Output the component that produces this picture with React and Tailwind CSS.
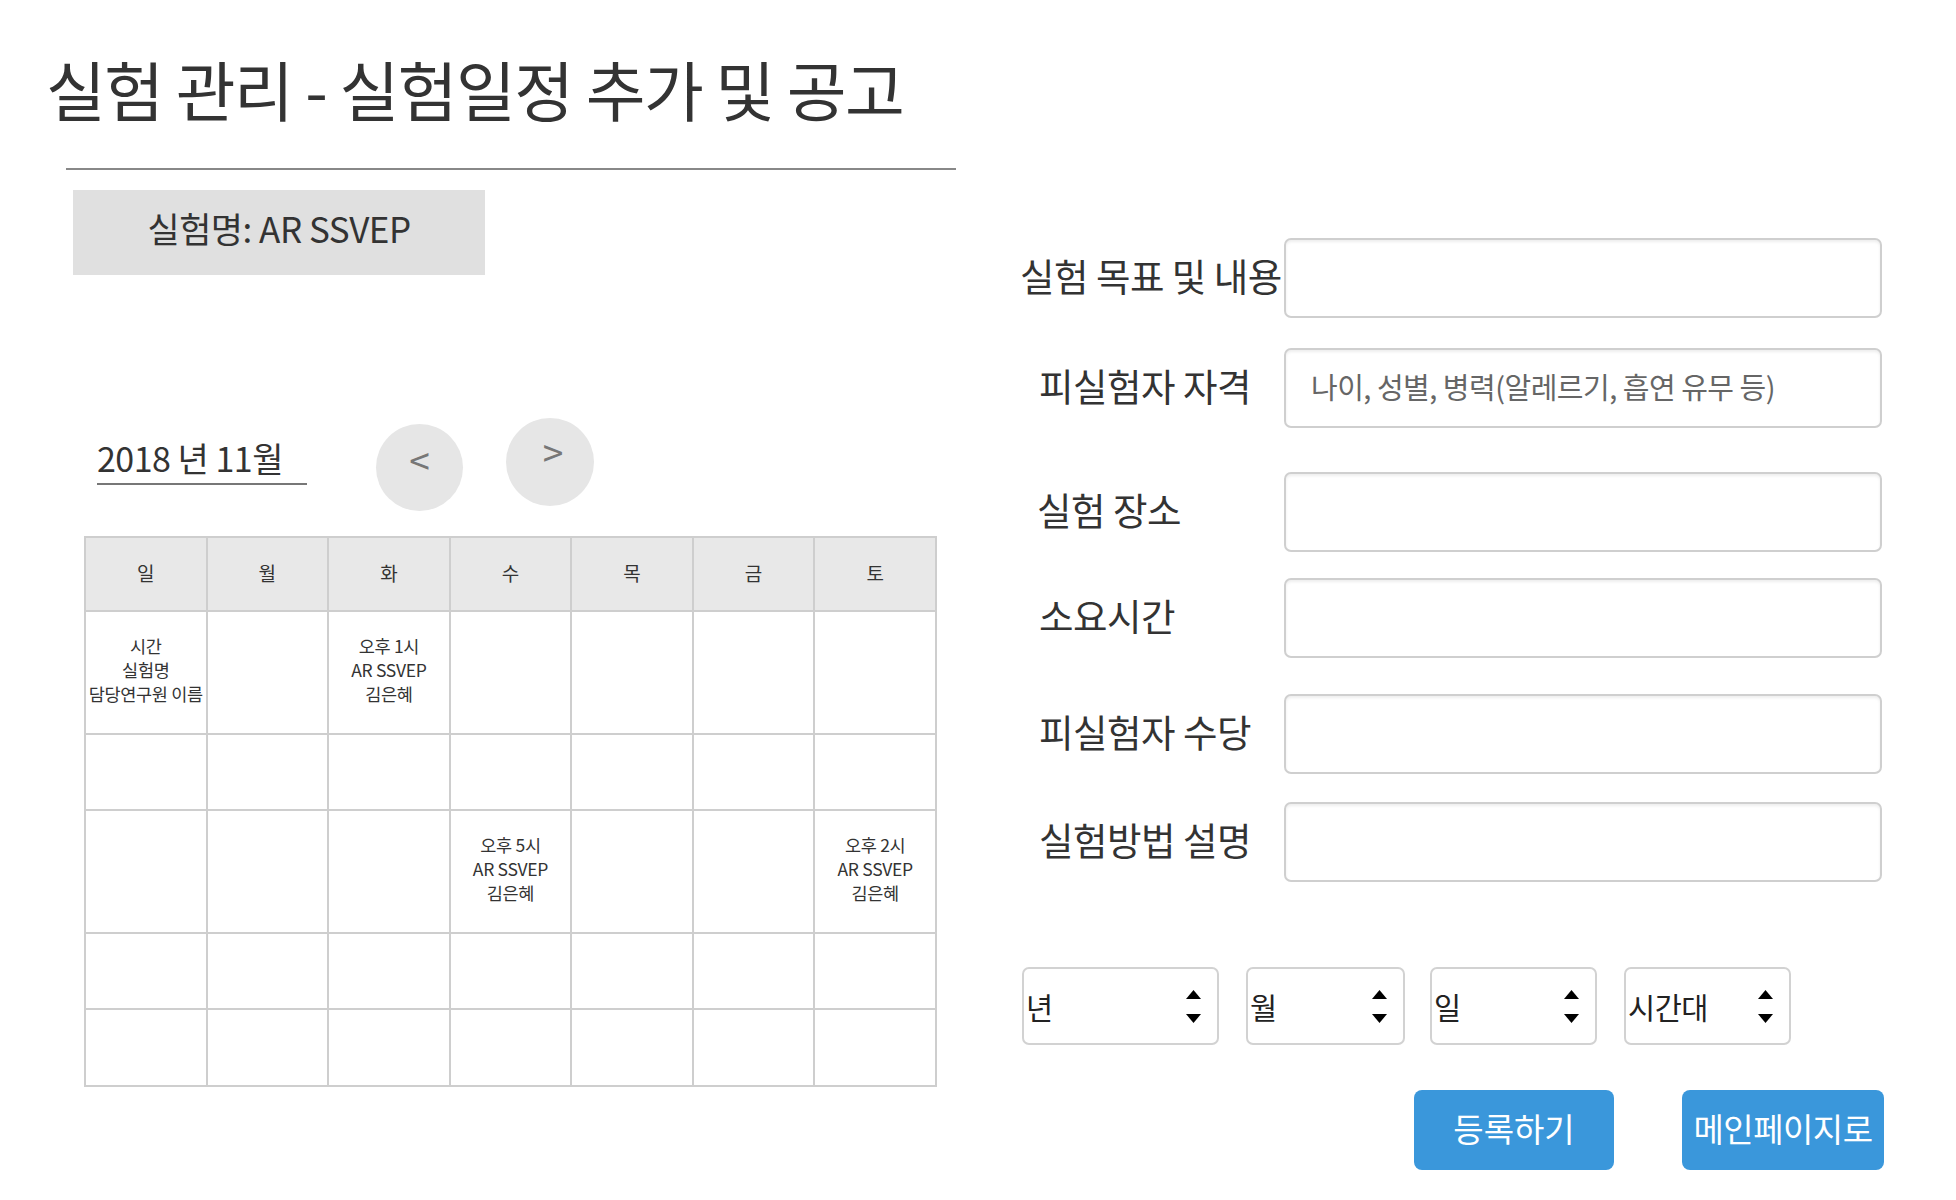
import React from "react";

const FONT = { fontFamily: '"Noto Sans CJK KR", "Noto Sans", sans-serif' };

function Cell({ lines }) {
  return (
    <td className="border-2 border-[#cecece] p-0 pb-[5px] text-center align-middle text-[17.5px] leading-[24px] text-[#333] whitespace-nowrap tracking-[-0.3px]">
      {lines ? lines.map((l, i) => <div key={i}>{l}</div>) : null}
    </td>
  );
}

function Spinner() {
  return (
    <svg width="15" height="33" viewBox="0 0 15 33" className="shrink-0">
      <polygon points="7.5,0 15,9 0,9" fill="#000" />
      <polygon points="0,24 15,24 7.5,33" fill="#000" />
    </svg>
  );
}

function SelectBox({ label, w }) {
  return (
    <div
      className={`flex items-center justify-between h-[78px] border-2 border-[#d2d2d2] rounded-[7px] bg-white pl-[2px] pr-[16px] ${w}`}
    >
      <span className="text-[29.5px] leading-none text-[#222] pt-[2px] tracking-[-0.5px]">{label}</span>
      <Spinner />
    </div>
  );
}

function FormRow({ label, mt, pl, placeholder }) {
  return (
    <div className={`flex items-center h-[80px] ${mt}`}>
      <div className={`w-[264px] shrink-0 text-[37.5px] leading-none text-[#333] whitespace-nowrap tracking-[-0.5px] pb-[7px] ${pl}`}>
        {label}
      </div>
      <div className="w-[598px] h-[80px] border-2 border-[#cfcfcf] rounded-[7px] bg-white shadow-[inset_0_2px_3px_rgba(0,0,0,0.07)] flex items-center pl-[25px]">
        {placeholder ? (
          <span className="text-[29px] text-[#666] leading-none tracking-[-0.5px] whitespace-nowrap pb-[3px]">{placeholder}</span>
        ) : null}
      </div>
    </div>
  );
}

export default function App() {
  const rows = [
    { h: "h-[123px]", cells: [["시간", "실험명", "담당연구원 이름"], null, ["오후 1시", "AR SSVEP", "김은혜"], null, null, null, null] },
    { h: "h-[76px]", cells: [null, null, null, null, null, null, null] },
    { h: "h-[123px]", cells: [null, null, null, ["오후 5시", "AR SSVEP", "김은혜"], null, null, ["오후 2시", "AR SSVEP", "김은혜"]] },
    { h: "h-[76px]", cells: [null, null, null, null, null, null, null] },
    { h: "h-[77px]", cells: [null, null, null, null, null, null, null] },
  ];
  const days = ["일", "월", "화", "수", "목", "금", "토"];

  return (
    <div className="w-[1956px] h-[1200px] bg-white flex overflow-hidden" style={FONT}>
      {/* Left column */}
      <div className="w-[1000px] shrink-0 flex flex-col">
        <h1 className="mt-[56px] ml-[46px] text-[65px] leading-[65px] font-normal text-[#333] tracking-[-1.5px] whitespace-nowrap">
          실험 관리 - 실험일정 추가 및 공고
        </h1>
        <div className="mt-[47px] ml-[66px] w-[890px] h-[2px] bg-[#888]" />
        <div className="mt-[20px] ml-[73px] w-[412px] h-[85px] bg-[#e0e0e0] flex items-center justify-center">
          <span className="text-[35px] leading-none text-[#333] tracking-[-0.5px] pb-[11px] whitespace-nowrap">실험명: AR SSVEP</span>
        </div>

        <div className="mt-[143px] h-[118px] flex items-start">
          <div className="mt-[19px] ml-[97px] w-[210px] border-b-2 border-[#777] pb-[4px]">
            <span className="text-[34px] leading-[42px] text-[#333] tracking-[-0.5px] whitespace-nowrap">2018 년 11월</span>
          </div>
          <div className="mt-[6px] ml-[69px] w-[87px] h-[87px] rounded-full bg-[#e6e6e6] flex items-center justify-center">
            <span className="text-[37px] leading-none text-[#777] pb-[16px]">&lt;</span>
          </div>
          <div className="mt-0 ml-[43px] w-[88px] h-[88px] rounded-full bg-[#e6e6e6] flex items-center justify-center">
            <span className="text-[37px] leading-none text-[#777] pb-[22px] pl-[6px]">&gt;</span>
          </div>
        </div>

        <table className="ml-[84px] w-[853px] table-fixed border-collapse border-2 border-[#cecece]">
          <thead>
            <tr className="h-[74px] bg-[#e8e8e8]">
              {days.map((d) => (
                <th key={d} className="border-2 border-[#cecece] font-normal text-[19px] text-[#333] text-center align-middle pb-[2px]">
                  {d}
                </th>
              ))}
            </tr>
          </thead>
          <tbody>
            {rows.map((r, i) => (
              <tr key={i} className={r.h}>
                {r.cells.map((c, j) => (
                  <Cell key={j} lines={c} />
                ))}
              </tr>
            ))}
          </tbody>
        </table>
      </div>

      {/* Right column */}
      <div className="flex-1 flex flex-col pl-[20px]">
        <FormRow label="실험 목표 및 내용" mt="mt-[238px]" pl="pl-0" />
        <FormRow label="피실험자 자격" mt="mt-[30px]" pl="pl-[19px]" placeholder="나이, 성별, 병력(알레르기, 흡연 유무 등)" />
        <FormRow label="실험 장소" mt="mt-[44px]" pl="pl-[17px]" />
        <FormRow label="소요시간" mt="mt-[26px]" pl="pl-[19px]" />
        <FormRow label="피실험자 수당" mt="mt-[36px]" pl="pl-[19px]" />
        <FormRow label="실험방법 설명" mt="mt-[28px]" pl="pl-[19px]" />

        <div className="mt-[85px] flex items-center">
          <div className="ml-[2px]">
            <SelectBox label="년" w="w-[197px]" />
          </div>
          <div className="ml-[27px]">
            <SelectBox label="월" w="w-[159px]" />
          </div>
          <div className="ml-[25px]">
            <SelectBox label="일" w="w-[167px]" />
          </div>
          <div className="ml-[27px]">
            <SelectBox label="시간대" w="w-[167px]" />
          </div>
        </div>

        <div className="mt-[45px] flex items-center">
          <button className="ml-[394px] w-[200px] h-[80px] rounded-[8px] bg-[#3a97db] text-white text-[33px] leading-none pb-[4px]">
            등록하기
          </button>
          <button className="ml-[68px] w-[202px] h-[80px] rounded-[8px] bg-[#3a97db] text-white text-[33px] leading-none whitespace-nowrap tracking-[-0.5px] pb-[4px]">
            메인페이지로
          </button>
        </div>
      </div>
    </div>
  );
}
